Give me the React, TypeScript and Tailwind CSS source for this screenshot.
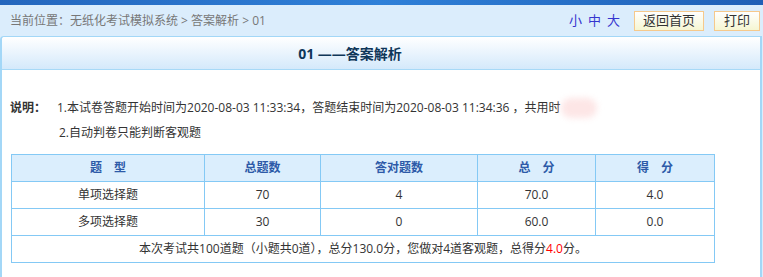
import React from "react";

const rows = [
  { name: "单项选择题", total: "70", right: "4", score: "70.0", got: "4.0" },
  { name: "多项选择题", total: "30", right: "0", score: "60.0", got: "0.0" },
];

export default function App() {
  return (
    <div className="w-[763px] h-[277px] overflow-hidden bg-[#dbedfc] text-[12px] text-[#333] font-['Open_Sans','Noto_Sans_CJK_SC',sans-serif]">
      {/* top band */}
      <div className="h-[5px] bg-gradient-to-r from-[#2466bd] via-[#2f80d8] to-[#1f5fb6]" />

      {/* breadcrumb */}
      <div className="h-[31px] flex items-center pl-[10px] pr-[3px]">
        <span className="text-[#777] text-[12px]">当前位置：无纸化考试模拟系统 &gt; 答案解析 &gt; 01</span>
        <div className="flex-1" />
        <div className="flex items-center gap-[6px] text-[13px] text-[#3535cf] mr-[14px]">
          <span>小</span>
          <span>中</span>
          <span>大</span>
        </div>
        <button className="h-[20px] w-[70px] border border-[#f6c98c] bg-gradient-to-b from-white to-[#f6f6d2] text-[13px] leading-none text-[#333]">
          返回首页
        </button>
        <button className="ml-[10px] h-[20px] w-[46px] border border-[#f6c98c] bg-gradient-to-b from-white to-[#f6f6d2] text-[13px] leading-none text-[#333]">
          打印
        </button>
      </div>

      {/* panel */}
      <div className="mr-[1px] border-x-2 border-t border-[#a3d7f7] rounded-tl-[4px] bg-white h-[260px]">
        <div className="h-[33px] flex items-center justify-center pr-[62px] bg-gradient-to-b from-white to-[#d4e9fb] border-b border-[#a7d9f7] rounded-tl-[3px]">
          <span className="text-[14px] font-bold text-[#0f3759]">01 ——答案解析</span>
        </div>

        <div className="pt-[25px] pl-[8px]">
          <div className="flex items-center h-[25px]">
            <span className="font-bold w-[47px]">说明：</span>
            <span>1.本试卷答题开始时间为2020-08-03 11:33:34，答题结束时间为2020-08-03 11:34:36 ，共用时</span>
            <span className="inline-block w-[36px] h-[20px] bg-[#fde6e6] blur-[3px] rounded-full" />
          </div>
          <div className="flex items-center h-[25px] pl-[49px]">2.自动判卷只能判断客观题</div>

          <table className="mt-[9px] ml-[1px] border-collapse w-[704px] text-center">
            <thead>
              <tr className="bg-[#dbeefd] text-[#2d5aa8] font-bold h-[27px]">
                <td className="border border-[#84c9f5] w-[193px]">题　型</td>
                <td className="border border-[#84c9f5] w-[116px]">总题数</td>
                <td className="border border-[#84c9f5] w-[157px]">答对题数</td>
                <td className="border border-[#84c9f5] w-[118px]">总　分</td>
                <td className="border border-[#84c9f5]">得　分</td>
              </tr>
            </thead>
            <tbody>
              {rows.map((r) => (
                <tr key={r.name} className="h-[27px]">
                  <td className="border border-[#84c9f5]">{r.name}</td>
                  <td className="border border-[#84c9f5]">{r.total}</td>
                  <td className="border border-[#84c9f5]">{r.right}</td>
                  <td className="border border-[#84c9f5]">{r.score}</td>
                  <td className="border border-[#84c9f5]">{r.got}</td>
                </tr>
              ))}
              <tr className="h-[27px]">
                <td colSpan={5} className="border border-[#84c9f5]">
                  本次考试共100道题（小题共0道），总分130.0分，您做对4道客观题，总得分
                  <span className="text-[#ff0000]">4.0</span>分。
                </td>
              </tr>
            </tbody>
          </table>
        </div>
      </div>
    </div>
  );
}
